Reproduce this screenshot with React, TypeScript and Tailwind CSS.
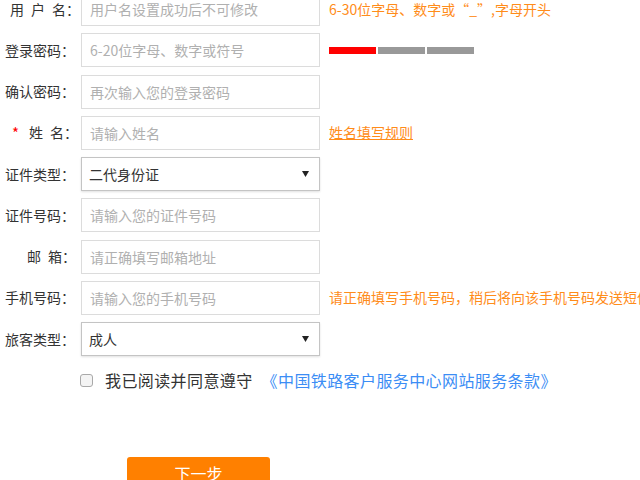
import React from 'react';

const FONT = "font-['Microsoft_YaHei','Noto_Sans_CJK_SC',sans-serif]";

interface RowProps {
    label: string;
    labelClass?: string;
    required?: boolean;
    children: React.ReactNode;
    hint?: React.ReactNode;
}

function Row({ label, labelClass, required, children, hint }: RowProps) {
    return (
        <div className="flex items-center h-[34px] whitespace-nowrap">
            <div className="w-[75px] shrink-0 flex items-center justify-end text-[14px] text-[#333]">
                {required && <span className="text-[#ff0000] mr-[10px] text-[15px] leading-none">*</span>}
                <span className={labelClass}>{label}</span>
            </div>
            <div className="ml-[6px] w-[239px] h-full shrink-0">{children}</div>
            {hint && <div className="ml-[9px] text-[14px] text-[#ff8c1a]">{hint}</div>}
        </div>
    );
}

function TextInput({ placeholder }: { placeholder: string }) {
    return (
        <input
            className="w-full h-full border border-[#dcdcdc] px-[8px] text-[14px] text-[#333] placeholder:text-[#b0b0b0] outline-none bg-white"
            placeholder={placeholder}
        />
    );
}

function SelectBox({ value }: { value: string }) {
    return (
        <div className="w-full h-full border border-[#c4c4c4] shadow-[0_1px_2px_rgba(0,0,0,0.12)] flex items-center justify-between pl-[7px] pr-[10px] text-[14px] text-[#333] bg-white">
            <span>{value}</span>
            <svg width="7" height="6" viewBox="0 0 7 6">
                <path d="M0 0 H7 L3.5 6 Z" fill="#222" />
            </svg>
        </div>
    );
}

export default function App() {
    return (
        <div className={`w-[640px] h-[480px] overflow-hidden bg-white ${FONT}`}>
            <div className="-mt-[8px] flex flex-col gap-[7.25px]">
                <Row
                    label="用&#8194;户&#8194;名："
                    labelClass="-mr-[5px]"
                    required
                    hint={<span>6-30位字母、数字或“_”,字母开头</span>}
                >
                    <TextInput placeholder="用户名设置成功后不可修改" />
                </Row>
                <Row
                    label="登录密码："
                    hint={
                        <div className="flex gap-[2px] items-center">
                            <div className="w-[47px] h-[7px] bg-[#ff0000]" />
                            <div className="w-[47px] h-[7px] bg-[#999]" />
                            <div className="w-[47px] h-[7px] bg-[#999]" />
                        </div>
                    }
                >
                    <TextInput placeholder="6-20位字母、数字或符号" />
                </Row>
                <Row label="确认密码：">
                    <TextInput placeholder="再次输入您的登录密码" />
                </Row>
                <Row
                    label="姓&#8194;名："
                    labelClass="-mr-[3px]"
                    required
                    hint={<span className="underline">姓名填写规则</span>}
                >
                    <TextInput placeholder="请输入姓名" />
                </Row>
                <Row label="证件类型：">
                    <SelectBox value="二代身份证" />
                </Row>
                <Row label="证件号码：">
                    <TextInput placeholder="请输入您的证件号码" />
                </Row>
                <Row label="邮&#8194;箱：" labelClass="-mr-[1px]">
                    <TextInput placeholder="请正确填写邮箱地址" />
                </Row>
                <Row label="手机号码：" hint={<span>请正确填写手机号码，稍后将向该手机号码发送短信验证码</span>}>
                    <TextInput placeholder="请输入您的手机号码" />
                </Row>
                <Row label="旅客类型：">
                    <SelectBox value="成人" />
                </Row>
            </div>

            <div className="mt-[12px] ml-[80px] flex items-center whitespace-nowrap text-[16px] tracking-[0.4px]">
                <span className="w-[13px] h-[13px] border border-[#a9a9a9] rounded-[3px] bg-[#f4f4f4]" />
                <span className="ml-[12px] text-[#333]">我已阅读并同意遵守</span>
                <span className="ml-[9px] text-[#3b8df5]">《中国铁路客户服务中心网站服务条款》</span>
            </div>

            <div className="mt-[65px] ml-[127px]">
                <button className="w-[143px] h-[40px] rounded-[3px] bg-[#ff8000] text-white text-[16px] flex justify-center pt-[4px]">
                    下一步
                </button>
            </div>
        </div>
    );
}
